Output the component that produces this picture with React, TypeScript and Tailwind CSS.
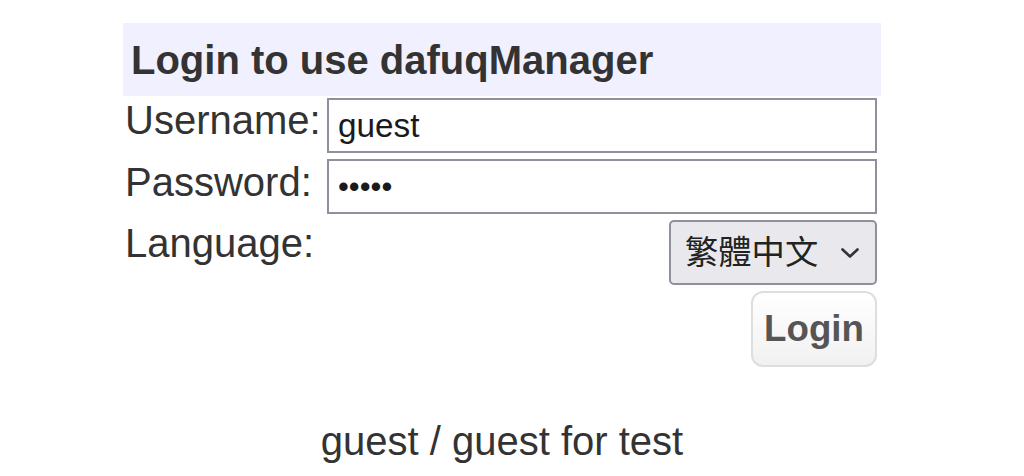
import { useState } from "react";

const LANGUAGES = [
  { value: "zh-TW", label: "繁體中文" },
  { value: "en", label: "English" },
];

export default function App() {
  const [username, setUsername] = useState("guest");
  const [password, setPassword] = useState("guest");
  const [lang, setLang] = useState("zh-TW");

  return (
    <div className="min-h-[476px] w-[1004px] bg-white pt-[23px] font-['Liberation_Sans',Arial,sans-serif] text-[#333]">
      <form
        onSubmit={(e) => e.preventDefault()}
        className="mx-auto flex w-[758px] flex-col"
      >
        <div className="flex h-[73px] items-center bg-[#f0f0ff] pl-[8px] text-[40px] leading-[46px] font-bold">
          Login to use dafuqManager
        </div>

        <div className="mt-[2px] flex items-start pr-[4px]">
          <label className="-mt-[1px] w-[204px] shrink-0 pl-[2px] text-[40px] leading-[46px]">
            Username:
          </label>
          <input
            type="text"
            value={username}
            onChange={(e) => setUsername(e.target.value)}
            className="h-[55px] flex-1 border-2 border-[#8f8f9d] bg-white px-[9px] text-[33.3px] text-[#1a1a1a] outline-none"
          />
        </div>

        <div className="mt-[6px] flex items-start pr-[4px]">
          <label className="w-[204px] shrink-0 pl-[2px] text-[40px] leading-[46px]">
            Password:
          </label>
          <input
            type="password"
            value={password}
            onChange={(e) => setPassword(e.target.value)}
            className="h-[55px] flex-1 border-2 border-[#8f8f9d] bg-white px-[9px] text-[31px] text-[#1a1a1a] outline-none"
          />
        </div>

        <div className="mt-[6px] flex items-start justify-between pr-[4px]">
          <label className="pl-[2px] text-[40px] leading-[46px]">
            Language:
          </label>
          <div className="relative">
            <select
              value={lang}
              onChange={(e) => setLang(e.target.value)}
              className="h-[65px] w-[208px] appearance-none rounded-[5px] border-2 border-[#8f8f9d] bg-[#e9e9ed] pl-[14px] font-['Liberation_Sans','Noto_Sans_CJK_TC',sans-serif] text-[33.3px] text-[#222] outline-none"
            >
              {LANGUAGES.map((l) => (
                <option key={l.value} value={l.value}>
                  {l.label}
                </option>
              ))}
            </select>
            <svg
              className="pointer-events-none absolute top-[27px] right-[17px] h-[12px] w-[20px]"
              viewBox="0 0 20 12"
              fill="none"
              stroke="#333"
              strokeWidth="2.6"
              strokeLinecap="round"
              strokeLinejoin="round"
            >
              <path d="M2.5 2.5l7.5 7 7.5-7" />
            </svg>
          </div>
        </div>

        <div className="mt-[6px] flex justify-end pr-[4px]">
          <button
            type="submit"
            className="h-[76px] w-[126px] rounded-[12px] border-2 border-[#dedede] bg-linear-to-b from-white to-[#f1f1f1] text-[36.7px] font-bold text-[#555]"
          >
            Login
          </button>
        </div>
      </form>

      <p className="mt-[51px] text-center text-[40px] leading-[46px]">
        guest / guest for test
      </p>
    </div>
  );
}
